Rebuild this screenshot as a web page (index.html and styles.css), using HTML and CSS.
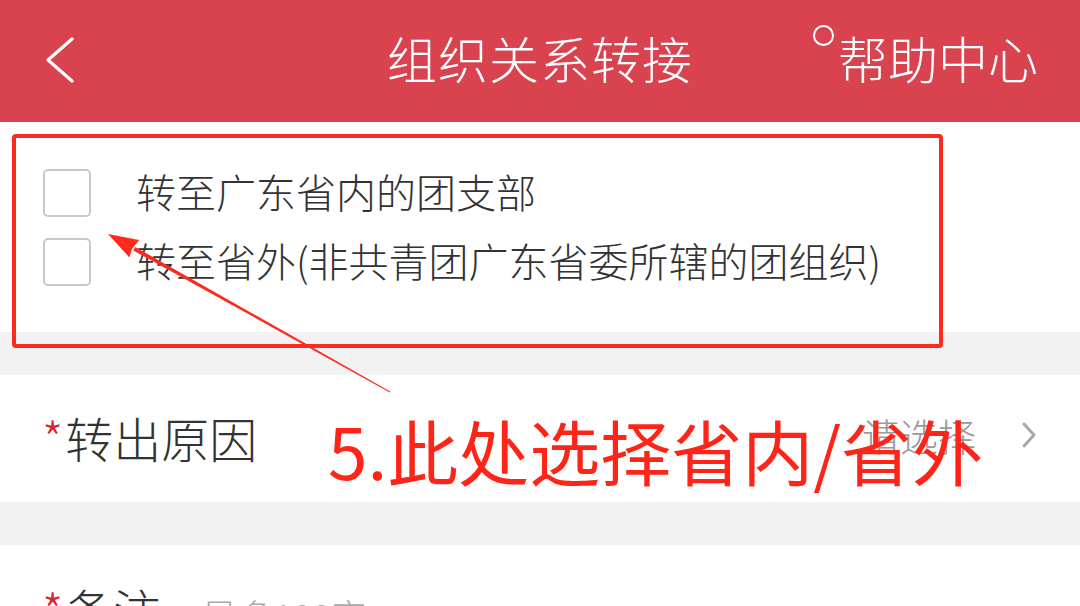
FILE: index.html
```html
<!DOCTYPE html>
<html lang="zh-CN">
<head>
<meta charset="utf-8">
<title>组织关系转接</title>
<link rel="stylesheet" href="styles.css">
</head>
<body>
<div class="app">
  <header class="nav">
    <div class="nav-left">
      <svg class="back" width="30" height="46" viewBox="0 0 30 46"><polyline points="27,2 3,23 27,44" fill="none" stroke="#fff" stroke-width="3.2" stroke-linecap="round" stroke-linejoin="round"/></svg>
    </div>
    <h1 class="title">组织关系转接</h1>
    <div class="nav-right"><span class="ring"></span><span class="help">帮助中心</span></div>
  </header>

  <section class="options">
    <div class="option"><span class="box"></span><span class="opt-text">转至广东省内的团支部</span></div>
    <div class="option"><span class="box"></span><span class="opt-text">转至省外(非共青团广东省委所辖的团组织)</span></div>
  </section>

  <div class="gap"></div>

  <div class="row">
    <span class="label"><span class="req">*</span>转出原因</span>
    <span class="value">请选择<svg class="chev" width="16" height="28" viewBox="0 0 16 28"><polyline points="3,3 13,14 3,25" fill="none" stroke="#a8a8a8" stroke-width="3" stroke-linecap="round" stroke-linejoin="round"/></svg></span>
  </div>

  <div class="gap"></div>

  <div class="row row-remark">
    <span class="label"><span class="req">*</span>备注</span>
    <span class="hint">最多100字</span>
  </div>

  <div class="mark-box"></div>
  <svg class="arrow" width="1080" height="606" viewBox="0 0 1080 606">
    <polygon points="389.8,392.4 390.2,391.6 135.2,247.0 133.2,250.4" fill="#ff2a1f"/>
    <polygon points="108,234 139.1,240.0 132,249 129.3,257.4" fill="#ff2a1f"/>
  </svg>
  <div class="mark-text">5.此处选择省内/省外</div>
</div>
</body>
</html>
```

FILE: styles.css
```css
* { box-sizing: border-box; }
html, body { margin: 0; padding: 0; }
body {
  font-family: "Noto Sans CJK SC", "Noto Sans", sans-serif;
  font-weight: 300;
  background: #ffffff;
}
.app {
  position: relative;
  width: 1080px;
  height: 606px;
  overflow: hidden;
  background: #ffffff;
}
.nav {
  height: 122px;
  background: #d8434f;
  display: grid;
  grid-template-columns: 1fr auto 1fr;
  align-items: center;
  color: #ffffff;
}
.nav-left {
  padding-left: 45px;
  display: flex;
  align-items: center;
  padding-bottom: 2px;
}
.back { display: block; }
.title {
  margin: 0 0 8px 0;
  font-size: 50px;
  font-weight: 300;
  line-height: 1;
  letter-spacing: 1px;
}
.nav-right {
  justify-self: end;
  height: 100%;
  display: flex;
  align-items: center;
  padding-right: 42px;
}
.ring {
  align-self: flex-start;
  margin-top: 25px;
  margin-right: 4px;
  width: 21px;
  height: 21px;
  border: 2.5px solid #ffffff;
  border-radius: 50%;
}
.help {
  font-size: 50px;
  line-height: 1;
  margin-bottom: 8px;
}
.options {
  padding: 36px 0;
  background: #ffffff;
}
.option {
  height: 69px;
  display: flex;
  align-items: center;
  padding-left: 43px;
  gap: 45px;
}
.box {
  width: 48px;
  height: 48px;
  border: 2px solid #c8c8c8;
  border-radius: 5px;
  flex: none;
}
.opt-text {
  font-size: 40px;
  line-height: 1;
  color: #333333;
  margin-bottom: 4px;
}
.gap {
  height: 43px;
  background: #f2f2f2;
}
.row {
  height: 127px;
  display: flex;
  align-items: center;
  justify-content: space-between;
  padding: 0 43px 0 42px;
  background: #ffffff;
}
.label {
  font-size: 48px;
  line-height: 1;
  color: #333333;
  margin-bottom: 4px;
}
.req {
  color: #d9262c;
  margin-right: 2px;
}
.value {
  display: flex;
  align-items: center;
  gap: 45px;
  font-size: 38px;
  line-height: 1;
  color: #9a9a9a;
  margin-bottom: 8px;
}
.chev { display: block; }
.row-remark {
  justify-content: flex-start;
  gap: 40px;
  align-items: flex-start;
  padding-top: 40px;
}
.hint {
  font-size: 36px;
  line-height: 1;
  color: #aaaaaa;
  margin-top: 12px;
}
.mark-box {
  position: absolute;
  left: 12px;
  top: 134px;
  width: 931px;
  height: 214px;
  border: 4px solid #ff2a1f;
  border-radius: 4px;
}
.arrow {
  position: absolute;
  left: 0;
  top: 0;
}
.mark-text {
  position: absolute;
  left: 328px;
  top: 414px;
  font-size: 71px;
  font-weight: 400;
  line-height: 1;
  color: #ff2418;
  white-space: nowrap;
}
```
